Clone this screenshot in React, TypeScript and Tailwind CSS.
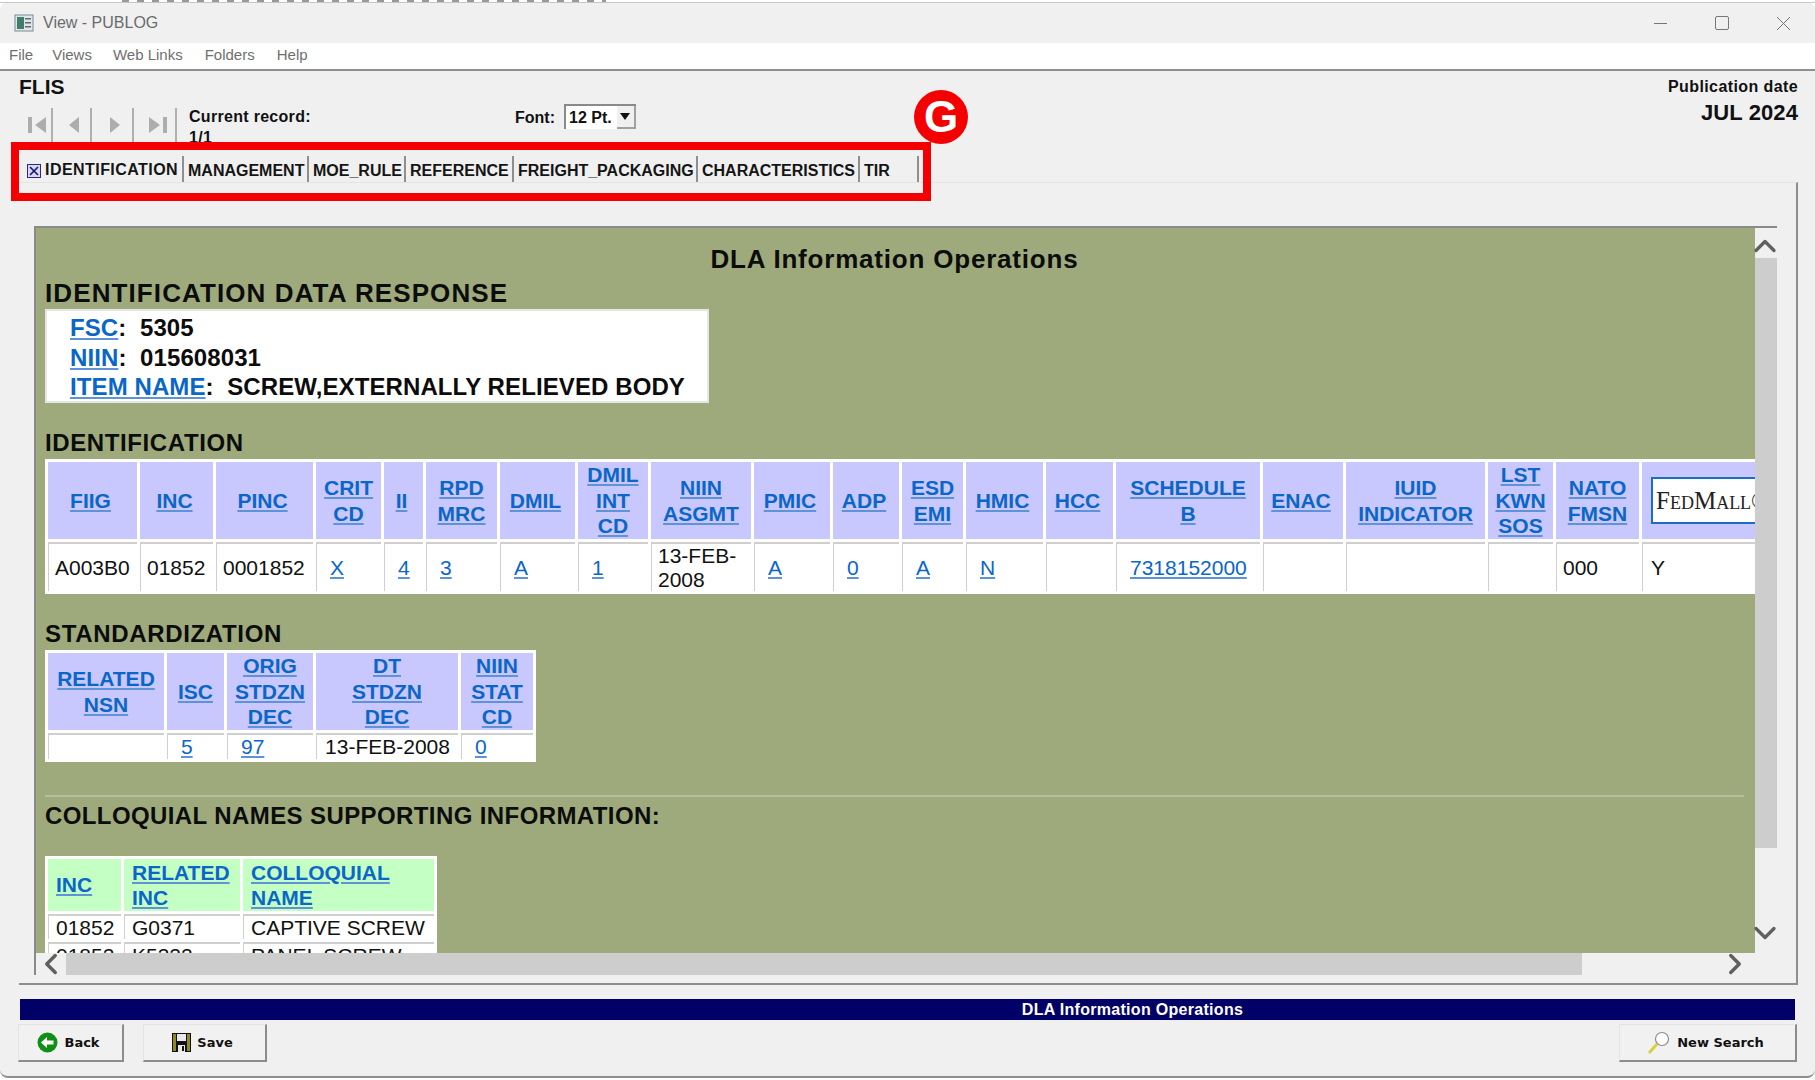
import { ChevronDown, ChevronLeft, ChevronRight, ChevronUp } from "lucide-react";

const tabs = [
  { label: "MANAGEMENT", width: "w-[125px]" },
  { label: "MOE_RULE", width: "w-[97px]" },
  { label: "REFERENCE", width: "w-[108px]" },
  { label: "FREIGHT_PACKAGING", width: "w-[184px]" },
  { label: "CHARACTERISTICS", width: "w-[162px]" },
  { label: "TIR", width: "w-[59px]" },
];

const idColumns = [
  { head: ["FIIG"], width: "w-[89px]", value: "A003B0", link: false },
  { head: ["INC"], width: "w-[73px]", value: "01852", link: false },
  { head: ["PINC"], width: "w-[97px]", value: "0001852", link: false },
  { head: ["CRIT", "CD"], width: "w-[65px]", value: "X", link: true },
  { head: ["II"], width: "w-[39px]", value: "4", link: true },
  { head: ["RPD", "MRC"], width: "w-[71px]", value: "3", link: true },
  { head: ["DMIL"], width: "w-[75px]", value: "A", link: true },
  { head: ["DMIL", "INT", "CD"], width: "w-[70px]", value: "1", link: true },
  { head: ["NIIN", "ASGMT"], width: "w-[100px]", value: "13-FEB-\n2008", link: false },
  { head: ["PMIC"], width: "w-[76px]", value: "A", link: true },
  { head: ["ADP"], width: "w-[66px]", value: "0", link: true },
  { head: ["ESD", "EMI"], width: "w-[61px]", value: "A", link: true },
  { head: ["HMIC"], width: "w-[77px]", value: "N", link: true },
  { head: ["HCC"], width: "w-[67px]", value: "", link: false },
  { head: ["SCHEDULE", "B"], width: "w-[144px]", value: "7318152000", link: true },
  { head: ["ENAC"], width: "w-[80px]", value: "", link: false },
  { head: ["IUID", "INDICATOR"], width: "w-[139px]", value: "", link: false },
  { head: ["LST", "KWN", "SOS"], width: "w-[65px]", value: "", link: false },
  { head: ["NATO", "FMSN"], width: "w-[83px]", value: "000", link: false },
];

const stdColumns = [
  { head: ["RELATED", "NSN"], width: "w-[116px]", value: "", link: false },
  { head: ["ISC"], width: "w-[57px]", value: "5", link: true },
  { head: ["ORIG", "STDZN", "DEC"], width: "w-[86px]", value: "97", link: true },
  { head: ["DT", "STDZN", "DEC"], width: "w-[142px]", value: "13-FEB-2008", link: false },
  { head: ["NIIN", "STAT", "CD"], width: "w-[72px]", value: "0", link: true },
];

const A = ({ children }: { children: React.ReactNode }) => (
  <a href="#" className="text-[#0a66c8] underline decoration-[#5f93d8] underline-offset-2">
    {children}
  </a>
);

function HeadLink({ lines }: { lines: string[] }) {
  return (
    <A>
      {lines.map((line, i) => (
        <span key={line}>
          {line}
          {i < lines.length - 1 && <br />}
        </span>
      ))}
    </A>
  );
}

function Heading({ children, className }: { children: React.ReactNode; className: string }) {
  return <h2 className={`h-[28px] font-bold leading-[28px] text-[#0c0c0c] ${className}`}>{children}</h2>;
}

function ToolButton({ children, className }: { children: React.ReactNode; className: string }) {
  return (
    <button className={`flex h-[38px] items-center justify-center gap-[6px] border-t border-l border-t-[#e4e4e4] border-l-[#e4e4e4] border-r-2 border-b-2 border-r-[#8c8c8c] border-b-[#8c8c8c] bg-[#f1f1f1] pr-[4px] font-['DejaVu_Sans',sans-serif] text-[13px] font-bold text-[#111] ${className}`}>
      {children}
    </button>
  );
}

export default function App() {
  return (
    <div className="h-[1080px] w-[1815px] overflow-hidden bg-white font-['Liberation_Sans',sans-serif]">
      {/* sliver of the desktop above the window */}
      <div className="ml-[122px] h-[2px] w-[484px] bg-[repeating-linear-gradient(90deg,#999_0_7px,transparent_7px_15px)]" />
      <div className="flex h-[1076px] flex-col rounded-[8px] border-b-2 border-[#8f8f8f] bg-[#f0f0f0]">
        {/* title bar */}
        <div className="flex h-[41px] shrink-0 items-center border-t border-[#c8c8c8] pl-[14px] pr-[24px]">
          <svg width="20" height="18" viewBox="0 0 20 18" className="mr-[9px]">
            <rect x="1" y="1" width="18" height="16" fill="#dfe6ea" stroke="#7d8a92" />
            <rect x="3" y="3" width="7" height="12" fill="#3f7f6a" />
            <rect x="11" y="4" width="6" height="1.5" fill="#667" />
            <rect x="11" y="8" width="6" height="1.5" fill="#667" />
            <rect x="11" y="12" width="6" height="1.5" fill="#667" />
          </svg>
          <span className="text-[16px] text-[#6b6b6b]">View - PUBLOG</span>
          <div className="ml-auto flex items-center gap-[47px]">
            <svg width="15" height="15" viewBox="0 0 15 15" stroke="#777" fill="none">
              <path d="M1 7.5h13" />
            </svg>
            <svg width="14" height="14" viewBox="0 0 14 14" stroke="#777" fill="none">
              <rect x="0.5" y="0.5" width="13" height="13" rx="1.5" />
            </svg>
            <svg width="15" height="15" viewBox="0 0 15 15" stroke="#777" fill="none">
              <path d="M1 1l13 13M14 1L1 14" />
            </svg>
          </div>
        </div>

        {/* menu */}
        <div className="flex h-[26px] shrink-0 items-center bg-white pb-[2px] text-[15px] text-[#6f6f6f]">
          <span className="ml-[9px]">File</span>
          <span className="ml-[19px]">Views</span>
          <span className="ml-[21px]">Web Links</span>
          <span className="ml-[22px]">Folders</span>
          <span className="ml-[22px]">Help</span>
        </div>
        <div className="h-[2px] shrink-0 bg-[#8e8e8e]" />

        {/* record header */}
        <div className="relative flex h-[71px] shrink-0 pl-[19px] pr-[17px]">
          <div className="flex-1">
            <div className="mt-[4px] h-[24px] text-[21px] font-bold leading-[24px] text-[#111]">FLIS</div>
            <div className="mt-[9px] flex">
              <div className="flex h-[34px]">
                <div className="flex w-[34px] items-center justify-center border-r-2 border-[#b0b0b0] pl-[4px]">
                  <svg width="18" height="16" viewBox="0 0 18 16" fill="#adadad"><rect y="0" width="4" height="16" /><path d="M18 0v16L7 8z" /></svg>
                </div>
                <div className="flex w-[39px] items-center justify-center border-r-2 border-[#b0b0b0] pl-[4px]">
                  <svg width="10" height="16" viewBox="0 0 10 16" fill="#adadad"><path d="M10 0v16L0 8z" /></svg>
                </div>
                <div className="flex w-[42px] items-center justify-center border-r-2 border-[#b0b0b0] pl-[6px]">
                  <svg width="10" height="16" viewBox="0 0 10 16" fill="#adadad"><path d="M0 0v16l10-8z" /></svg>
                </div>
                <div className="flex w-[43px] items-center justify-center border-r-2 border-[#b0b0b0] pl-[6px]">
                  <svg width="18" height="16" viewBox="0 0 18 16" fill="#adadad"><rect x="14" width="4" height="16" /><path d="M0 0v16l11-8z" /></svg>
                </div>
              </div>
              <div className="ml-[12px] -mt-[2px] w-[326px] text-[16px] font-bold leading-[21px] tracking-[0.3px] text-[#111]">
                Current record:
                <br />
                1/1
              </div>
              <div className="-mt-[4px] flex h-[25px] items-center text-[16px] font-bold text-[#111]">
                <span className="mt-[3px]">Font:</span>
                <div className="ml-[9px] flex h-[25px] w-[72px] items-center border-t-2 border-l-2 border-[#8a8a8a] bg-white pl-[3px] text-[16px]">
                  12 Pt.
                  <div className="ml-auto flex h-[23px] w-[19px] items-center justify-center border-r-2 border-b-2 border-[#a0a0a0] bg-[#f0f0f0]">
                    <svg width="10" height="7" viewBox="0 0 10 7" fill="#111"><path d="M0 0h10L5 7z" /></svg>
                  </div>
                </div>
              </div>
            </div>
          </div>
          <div className="text-right font-bold text-[#111]">
            <div className="mt-[7px] text-[16px] leading-[18px] tracking-[0.4px]">Publication date</div>
            <div className="mt-[5px] text-[22px] leading-[24px] tracking-[0.1px]">JUL 2024</div>
          </div>
          {/* G marker */}
          <div className="absolute left-[914px] top-[19px] flex h-[54px] w-[54px] items-center justify-center rounded-full bg-[#f40000] text-[44px] font-bold leading-none text-white">
            G
          </div>
        </div>

        {/* tabs */}
        <div className="relative mt-[14px] flex h-[26px] shrink-0 pl-[19px] text-[16px] font-bold text-[#151515]">
          <div className="flex w-[165px] items-center border-r-2 border-[#8f8f8f] pl-[8px] pt-[3px]">
            <span className="mr-[4px] flex h-[14px] w-[14px] items-center justify-center border border-[#2a2a80] bg-[#d8d8f0]">
              <svg width="10" height="10" viewBox="0 0 10 10" stroke="#14147a" strokeWidth="1.6"><path d="M1 1l8 8M9 1L1 9" /></svg>
            </span>
            <span className="-mt-[1px] whitespace-nowrap tracking-[0.45px]">IDENTIFICATION</span>
          </div>
          {tabs.map((tab) => (
            <div key={tab.label} className={`${tab.width} flex items-center whitespace-nowrap border-r-2 border-[#8f8f8f] pl-[4px] pt-[4px]`}>
              {tab.label}
            </div>
          ))}
          {/* red annotation box */}
          <div className="absolute left-[11px] top-[-14px] h-[59px] w-[920px] border-[8px] border-[#f40000]" />
        </div>

        {/* main panel */}
        <div className="mr-[17px] ml-[19px] flex h-[803px] shrink-0 flex-col border-t border-r-2 border-b-2 border-t-[#e4e4e4] border-r-[#8e8e8e] border-b-[#8e8e8e] pl-[15px] pr-[19px] pt-[43px]">
          <div className="flex h-[727px]">
            <div className="min-w-0 flex-1 overflow-hidden border-t-2 border-l-2 border-[#8a8a8a] bg-[#9eaa7b] pl-[9px]">
              <h1 className="mt-[16px] h-[30px] pr-[11px] text-center text-[26px] font-bold leading-[30px] tracking-[0.8px] text-[#0c0c0c]">DLA Information Operations</h1>
              <Heading className="mt-[5px] text-[26px] tracking-[1.1px]">IDENTIFICATION DATA RESPONSE</Heading>

              <div className="mt-[2px] h-[94px] w-[664px] border-2 border-[#e6e6e6] bg-white pl-[23px] pt-[2px] text-[24px] font-bold leading-[29.5px] tracking-[0.1px] text-[#0c0c0c]">
                <div><A>FSC</A>:&nbsp; 5305</div>
                <div><A>NIIN</A>:&nbsp; 015608031</div>
                <div><A>ITEM NAME</A>:&nbsp; SCREW,EXTERNALLY RELIEVED BODY</div>
              </div>

              <Heading className="mt-[26px] text-[24px] tracking-[0.6px]">IDENTIFICATION</Heading>
              <table className="mt-[2px] w-[1860px] table-fixed border-separate border-spacing-[3px] bg-white text-[21px] leading-[25.5px]">
                <thead>
                  <tr>
                    {idColumns.map((col) => (
                      <th key={col.head.join()} className={`${col.width} h-[77px] bg-[#c8c8ff] p-0 text-center font-bold ${col.head.length > 1 ? "" : "pr-[4px]"}`}>
                        <HeadLink lines={col.head} />
                      </th>
                    ))}
                    <th className="bg-[#c8c8ff] p-0 pl-[9px] text-left align-middle">
                      <div className="flex h-[47px] w-[240px] items-center border-2 border-[#1a6fc4] bg-white pl-[3px] font-['Liberation_Serif',serif] text-[25px] font-normal text-[#222] [font-variant-caps:small-caps]">
                        FedMall©
                      </div>
                    </th>
                  </tr>
                </thead>
                <tbody>
                  <tr>
                    {idColumns.map((col) => (
                      <td key={col.head.join()} className={`h-[49px] whitespace-pre border-t-2 border-l border-[#cfcfcf] bg-white align-middle leading-[23.5px] text-[#111] ${col.link ? "pl-[13px]" : "pl-[6px]"}`}>
                        {col.link ? <A>{col.value}</A> : col.value}
                      </td>
                    ))}
                    <td className="border-t-2 border-l border-[#cfcfcf] pl-[8px] align-middle text-[#111]">Y</td>
                  </tr>
                </tbody>
              </table>

              <Heading className="mt-[26px] text-[24px] tracking-[0.66px]">STANDARDIZATION</Heading>
              <table className="mt-[2px] w-[489px] table-fixed border-separate border-spacing-[3px] bg-white text-[21px] leading-[25.5px]">
                <thead>
                  <tr>
                    {stdColumns.map((col) => (
                      <th key={col.head.join()} className={`${col.width} h-[77px] bg-[#c8c8ff] p-0 text-center font-bold`}>
                        <HeadLink lines={col.head} />
                      </th>
                    ))}
                  </tr>
                </thead>
                <tbody>
                  <tr>
                    {stdColumns.map((col) => (
                      <td key={col.head.join()} className={`h-[26px] border-t-2 border-l border-[#cfcfcf] p-0 align-middle leading-[24px] text-[#111] ${col.link ? "pl-[13px] text-left" : "text-center"}`}>
                        {col.link ? <A>{col.value}</A> : col.value}
                      </td>
                    ))}
                  </tr>
                </tbody>
              </table>

              <div className="mt-[33px] mr-[11px] h-[2px] bg-[#b6c09a]" />
              <Heading className="mt-[5px] text-[24px] tracking-[0.4px]">COLLOQUIAL NAMES SUPPORTING INFORMATION:</Heading>

              <table className="mt-[26px] w-[391px] table-fixed border-separate border-spacing-[3px] bg-white text-[21px] leading-[25.5px]">
                <thead>
                  <tr>
                    <th className="h-[52px] w-[73px] bg-[#c4ffc4] p-0 pl-[8px] text-left font-bold"><A>INC</A></th>
                    <th className="w-[116px] bg-[#c4ffc4] p-0 pl-[8px] text-left font-bold"><HeadLink lines={["RELATED", "INC"]} /></th>
                    <th className="w-[191px] bg-[#c4ffc4] p-0 pl-[8px] text-left font-bold"><HeadLink lines={["COLLOQUIAL", "NAME"]} /></th>
                  </tr>
                </thead>
                <tbody className="leading-[23px] text-[#111]">
                  <tr>
                    <td className="h-[25px] border-t-2 border-l border-[#cfcfcf] pl-[7px]">01852</td>
                    <td className="border-t-2 border-l border-[#cfcfcf] pl-[7px]">G0371</td>
                    <td className="border-t-2 border-l border-[#cfcfcf] pl-[7px]">CAPTIVE SCREW</td>
                  </tr>
                  <tr>
                    <td className="h-[25px] border-t-2 border-l border-[#cfcfcf] pl-[7px]">01852</td>
                    <td className="border-t-2 border-l border-[#cfcfcf] pl-[7px]">K5322</td>
                    <td className="border-t-2 border-l border-[#cfcfcf] pl-[7px]">PANEL SCREW</td>
                  </tr>
                </tbody>
              </table>
            </div>

            {/* vertical scrollbar */}
            <div className="flex w-[22px] shrink-0 flex-col items-center border-t-2 border-[#8a8a8a]">
              <div className="flex h-[30px] w-full shrink-0 items-center justify-center pr-[3px] pt-[6px] text-[#5f5f5f]">
                <ChevronUp size={36} strokeWidth={2.2} className="shrink-0" />
              </div>
              <div className="h-[590px] w-full shrink-0 bg-[#cdcdcd]" />
              <div className="mt-auto flex h-[30px] w-full shrink-0 items-center justify-center pb-[10px] pr-[3px] text-[#5f5f5f]">
                <ChevronDown size={36} strokeWidth={2.2} className="shrink-0" />
              </div>
            </div>
          </div>

          {/* horizontal scrollbar */}
          <div className="flex h-[22px] shrink-0 items-center border-l-2 border-[#8a8a8a]">
            <div className="flex w-[30px] shrink-0 items-center justify-center text-[#5f5f5f]">
              <ChevronLeft size={34} strokeWidth={2.4} className="shrink-0" />
            </div>
            <div className="h-full w-[1516px] shrink-0 bg-[#cdcdcd]" />
            <div className="ml-auto mr-[25px] flex items-center text-[#5f5f5f]">
              <ChevronRight size={34} strokeWidth={2.4} className="shrink-0" />
            </div>
          </div>
        </div>

        {/* status strip */}
        <div className="mx-[20px] mt-[14px] flex h-[21px] shrink-0 items-center justify-center bg-[#000066] pl-[450px] text-[16px] font-bold tracking-[0.3px] text-white">
          DLA Information Operations
        </div>

        {/* bottom buttons */}
        <div className="mx-[18px] mt-[4px] flex">
          <ToolButton className="w-[106px]">
            <svg width="21" height="21" viewBox="0 0 21 21">
              <circle cx="10.5" cy="10.5" r="10" fill="#0f8f14" />
              <path d="M4 10.5L10 5v3.5h6.5v4H10V16z" fill="#fff" />
            </svg>
            Back
          </ToolButton>
          <ToolButton className="ml-[19px] w-[124px]">
            <svg width="19" height="19" viewBox="0 0 19 19">
              <rect width="19" height="19" fill="#111" />
              <rect x="1" y="1" width="3" height="17" fill="#8f8a1e" />
              <rect x="15" y="1" width="3" height="17" fill="#8f8a1e" />
              <rect x="5" y="1" width="9" height="7" fill="#e9e9e9" />
              <rect x="6" y="12" width="7" height="7" fill="#e9e9e9" />
              <rect x="10" y="13" width="2" height="5" fill="#111" />
            </svg>
            Save
          </ToolButton>
          <ToolButton className="ml-auto w-[178px]">
            <svg width="24" height="24" viewBox="0 0 24 24">
              <path d="M2 22L10 13" stroke="#d9d13a" strokeWidth="3" />
              <circle cx="15" cy="8" r="6.5" fill="#fff" stroke="#8c8c8c" strokeWidth="1.2" />
            </svg>
            New Search
          </ToolButton>
        </div>
      </div>
    </div>
  );
}
